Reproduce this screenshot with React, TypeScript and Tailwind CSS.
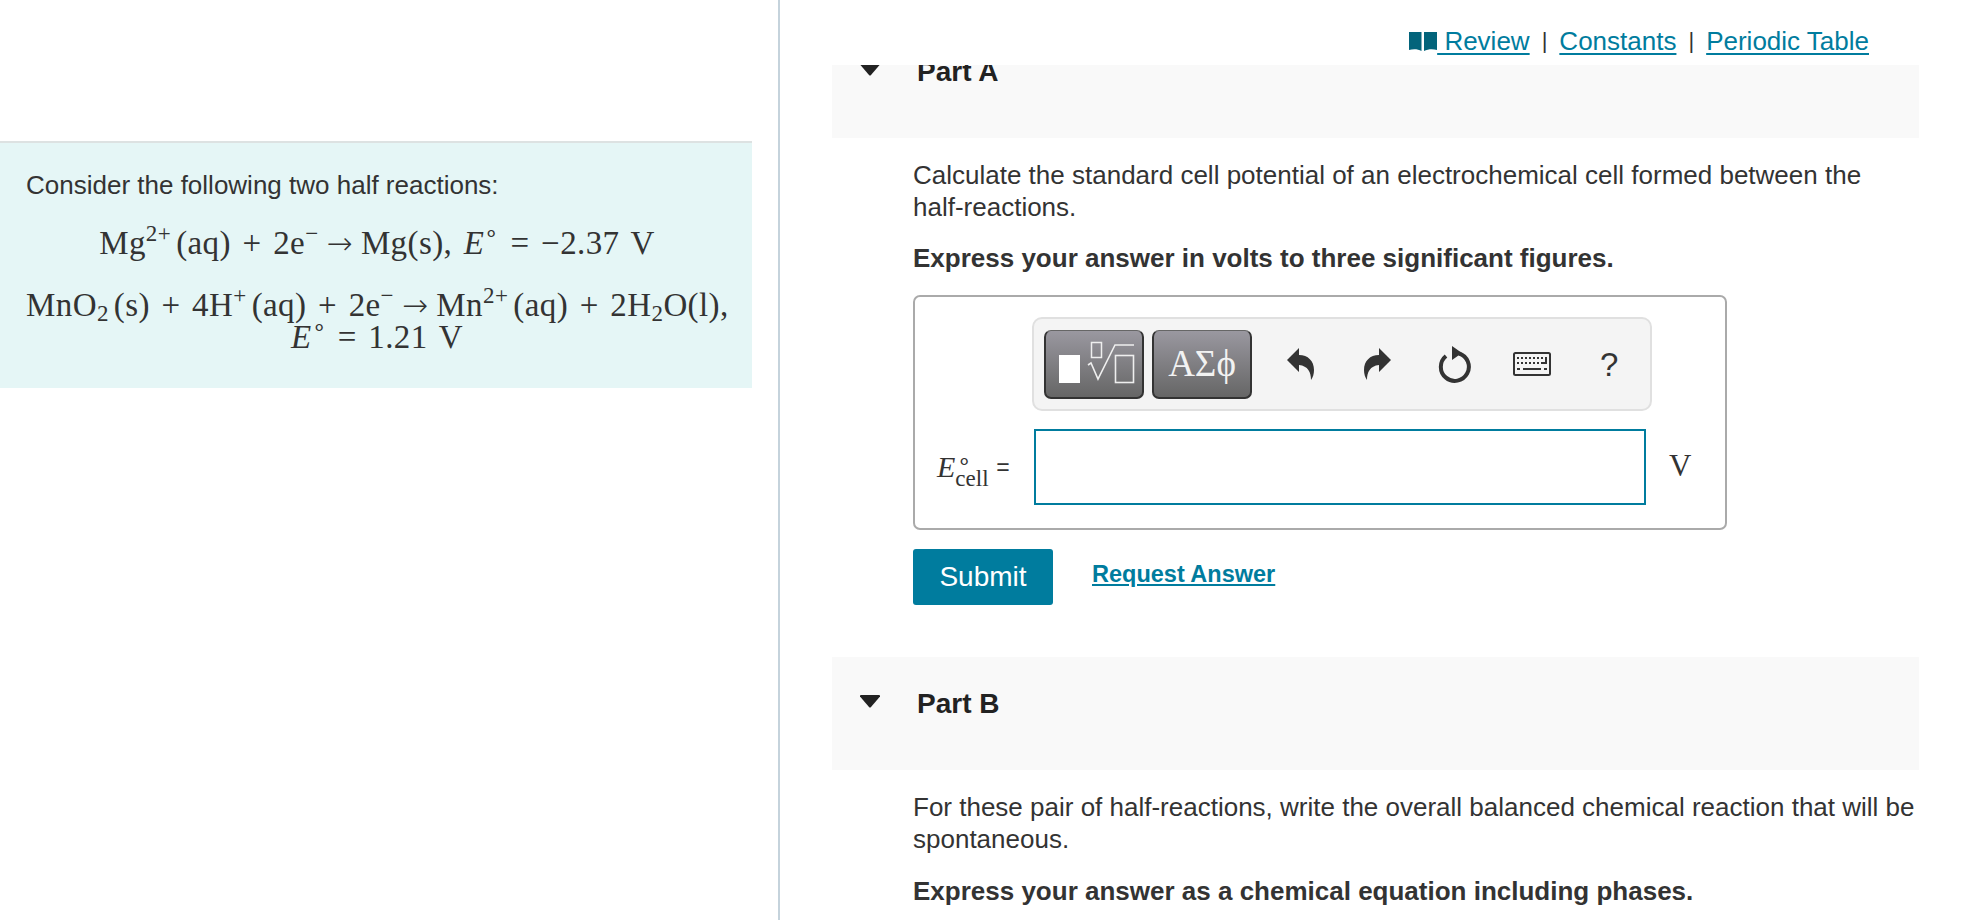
const Sup = ({ children }: { children: React.ReactNode }) => (
  <sup className="text-[23px] leading-none align-baseline relative -top-[13px]">{children}</sup>
);
const Sub = ({ children }: { children: React.ReactNode }) => (
  <sub className="text-[23px] leading-none align-baseline relative top-[5px]">{children}</sub>
);
const Sp = () => <span className="inline-block w-[5px]" />;
const Ar = () => <span className="inline-block mx-[8px] [font-family:'DejaVu_Sans',sans-serif] text-[31px] leading-none font-extralight">→</span>;
const Eo = () => (
  <>
    <i>E</i>
    <Sup>∘</Sup>
  </>
);

const Tri = () => (
  <svg width="22" height="13" viewBox="0 0 22 13" className="shrink-0">
    <path d="M1 1.5 Q0.5 0 2 0 H20 Q21.5 0 21 1.5 L12 12 Q11 13 10 12 Z" fill="#222" />
  </svg>
);

const Part = ({ name }: { name: string }) => (
  <div className="h-[113px] ml-[1px] w-[1087px] bg-[#f9f9f9] flex items-start pl-[27px] pt-[34px] gap-[36px]">
    <div className="pt-[4px]">
      <Tri />
    </div>
    <div className="text-[28px] leading-[26px] font-bold text-[#222]">{name}</div>
  </div>
);

const Icons = () => (
  <>
    <svg width="27" height="32" viewBox="0 0 27 32" className="ml-[35px]">
      <path d="M0 12 L12 0 V7 C21 7 27 13 27 22 C27 26 26 29 24 32 C24 24 21 18 12 17 V24 Z" fill="#333" />
    </svg>
    <svg width="27" height="32" viewBox="0 0 27 32" className="ml-[50px]">
      <path d="M27 12 L15 0 V7 C6 7 0 13 0 22 C0 26 1 29 3 32 C3 24 6 18 15 17 V24 Z" fill="#333" />
    </svg>
    <svg width="34" height="37" viewBox="0 0 34 37" className="ml-[47px]">
      <path d="M21 7.5 A14 14 0 1 1 8 10" fill="none" stroke="#333" strokeWidth="4" />
      <path d="M14 0 L24 7 L14 14 Z" fill="#333" />
    </svg>
    <svg width="38" height="24" viewBox="0 0 38 24" className="ml-[41px]">
      <rect x="1" y="1" width="36" height="22" rx="1.5" fill="none" stroke="#333" strokeWidth="2" />
      <path
        d="M4 5h2v2H4zM8 5h2v2H8zM12 5h2v2h-2zM16 5h2v2h-2zM20 5h2v2h-2zM24 5h2v2h-2zM28 5h2v2h-2zM32 5h2v7h-6v-2h4zM4 10h2v2H4zM8 10h2v2H8zM12 10h2v2h-2zM16 10h2v2h-2zM20 10h2v2h-2zM24 10h2v2h-2zM4 16h3v2H4zM10 16h18v2H10zM31 16h3v2h-3z"
        fill="#333"
      />
    </svg>
    <span className="ml-[49px] text-[33px] leading-none text-[#333]">?</span>
  </>
);

const BookIcon = () => (
  <svg width="28" height="20" viewBox="0 0 28 20">
    <path d="M0 1 H12.5 V20 C9 18 4 18 0 19 Z M15 1 H28 V19 C24 18 19 18 15 20 Z" fill="#03647b" />
  </svg>
);

export default function App() {
  return (
    <div className="h-[920px] w-[1966px] flex overflow-hidden bg-white [font-family:'Liberation_Sans',Arial,sans-serif] text-[#333]">
      <div className="w-[780px] h-full border-r-2 border-[#c5d3dc] shrink-0 pt-[141px]">
        <div className="w-[752px] h-[247px] bg-[#e5f6f6] border-t-2 border-[#dde2e2] pt-[25px] pl-[26px] pr-[24px]">
          <p className="text-[26px] leading-[34px]">Consider the following two half reactions:</p>
          <div className="[font-family:'Liberation_Serif',serif] text-[33px] leading-[34px] text-[#333] [word-spacing:3px] tracking-[0.4px]">
            <div className="text-center mt-[24px] whitespace-nowrap">
              Mg<Sup>2+</Sup>
              <Sp />(aq) + 2e<Sup>−</Sup>
              <Ar />Mg(s), <Eo /> = −2.37 V
            </div>
            <div className="text-center mt-[28px] whitespace-nowrap">
              MnO<Sub>2</Sub>
              <Sp />(s) + 4H<Sup>+</Sup>
              <Sp />(aq) + 2e<Sup>−</Sup>
              <Ar />Mn<Sup>2+</Sup>
              <Sp />(aq) + 2H<Sub>2</Sub>O(l),
            </div>
            <div className="text-center whitespace-nowrap leading-[30px]">
              <Eo /> = 1.21 V
            </div>
          </div>
        </div>
      </div>

      <div className="flex-1 min-w-0 flex flex-col pl-[51px]">
        <div className="h-[65px] shrink-0 flex justify-end items-start pt-[24px] pr-[97px] text-[26px] leading-[34px]">
          <div className="flex items-center">
            <BookIcon />
            <a className="text-[#007c9e] underline underline-offset-[3px] whitespace-pre"> Review</a>
            <span className="mx-[12px] text-[#333] text-[22px]">|</span>
            <a className="text-[#007c9e] underline underline-offset-[3px]">Constants</a>
            <span className="mx-[12px] text-[#333] text-[22px]">|</span>
            <a className="text-[#007c9e] underline underline-offset-[3px]">Periodic Table</a>
          </div>
        </div>
        <div className="flex-1 min-h-0 overflow-hidden">
          <div className="-mt-[40px]">
            <Part name="Part A" />
            <div className="pl-[82px] pr-[40px]">
              <p className="text-[26px] leading-[32px] mt-[21px] w-[1000px]">
                Calculate the standard cell potential of an electrochemical cell formed between the
                <br />
                half-reactions.
              </p>
              <p className="text-[26px] leading-[32px] font-bold mt-[19px]">Express your answer in volts to three significant figures.</p>
              <div className="mt-[21px] w-[814px] h-[235px] border-2 border-[#aaa] rounded-[7px] pt-[20px]">
                <div className="ml-[117px] w-[620px] h-[94px] border-2 border-[#e0e0e0] rounded-[10px] bg-[#f4f4f4] flex items-center pl-[10px]">
                  <button className="w-[100px] h-[69px] rounded-[7px] border-2 border-t border-[#333] border-t-[#666] bg-gradient-to-b from-[#9a98a0] to-[#666] overflow-hidden">
                    <svg width="96" height="66" viewBox="2 2 96 66" className="block">
                      <rect x="15" y="26" width="21" height="28" fill="#fff" />
                      <rect x="47.5" y="13.5" width="10" height="15" fill="none" stroke="#eee" strokeWidth="1.5" />
                      <path d="M44 36 L47 34 L54 50 L71 16 H90" fill="none" stroke="#eee" strokeWidth="1.6" />
                      <rect x="71.5" y="26.5" width="18" height="27" fill="none" stroke="#eee" strokeWidth="1.6" />
                    </svg>
                  </button>
                  <button className="ml-[8px] w-[100px] h-[69px] rounded-[7px] border-2 border-t border-[#333] border-t-[#666] bg-gradient-to-b from-[#9a98a0] to-[#666] flex items-center justify-center text-[#f2f2f2] [font-family:'Liberation_Serif',serif] text-[37px] leading-none">
                    ΑΣϕ
                  </button>
                  <Icons />
                </div>
                <div className="flex items-center mt-[18px]">
                  <div className="w-[119px] shrink-0 pl-[22px] flex items-center">
                    <i className="[font-family:'Liberation_Serif',serif] text-[30px] leading-none">E</i>
                    <span className="flex flex-col [font-family:'Liberation_Serif',serif] text-[23px] leading-[17px] w-[33px] ml-[0px] pt-[6px]">
                      <span className="pl-[2px]">∘</span>
                      <span>cell</span>
                    </span>
                    <span className="ml-[8px] text-[23px] leading-none">=</span>
                  </div>
                  <div className="w-[612px] h-[76px] border-2 border-[#007c9e] bg-white shrink-0" />
                  <div className="ml-[23px] -mt-[4px] [font-family:'Liberation_Serif',serif] text-[31px] leading-none">V</div>
                </div>
              </div>
              <div className="flex items-center mt-[19px]">
                <button className="w-[140px] h-[56px] rounded-[3px] bg-[#007c9e] text-white text-[28px]">Submit</button>
                <a className="ml-[39px] text-[#007c9e] underline underline-offset-[2px] font-bold text-[23.5px] -mt-[4px]">Request Answer</a>
              </div>
            </div>
            <div className="mt-[52px]">
              <Part name="Part B" />
            </div>
            <div className="pl-[82px] pr-[40px]">
              <p className="text-[26px] leading-[32px] mt-[21px] w-[1030px]">
                For these pair of half-reactions, write the overall balanced chemical reaction that will be
                <br />
                spontaneous.
              </p>
              <p className="text-[26px] leading-[32px] font-bold mt-[20px]">Express your answer as a chemical equation including phases.</p>
            </div>
          </div>
        </div>
      </div>
    </div>
  );
}
